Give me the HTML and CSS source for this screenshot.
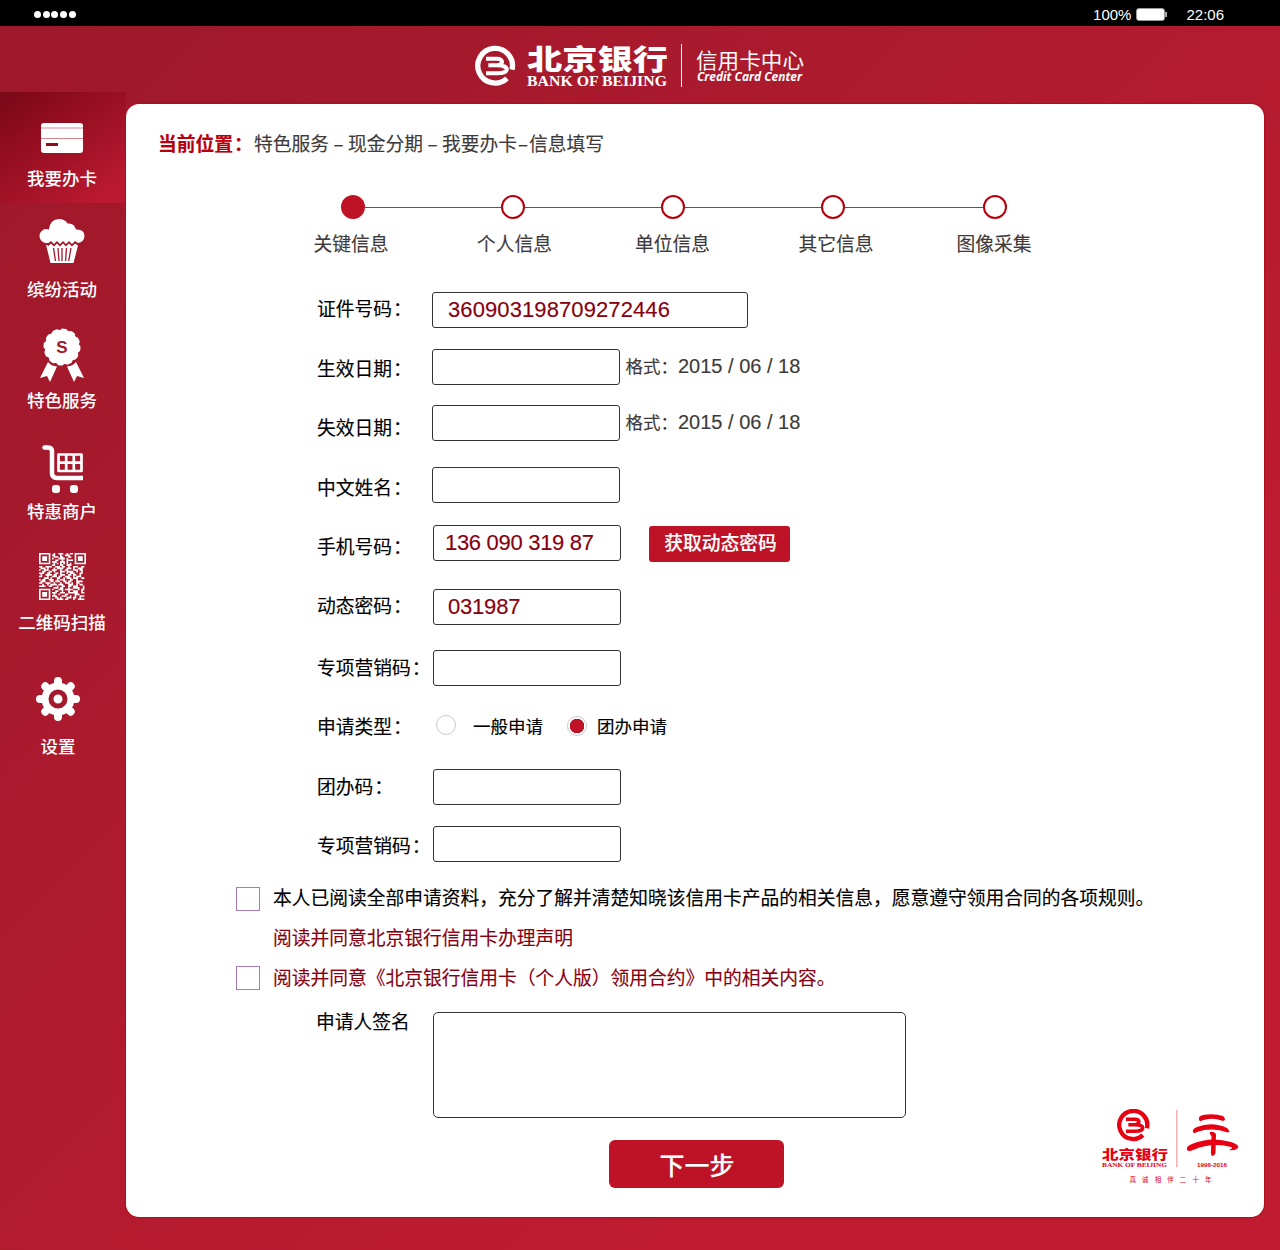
FILE: index.html
```html
<!DOCTYPE html>
<html lang="zh-CN">
<head>
    <meta charset="UTF-8">
    <meta name="viewport" content="width=device-width, initial-scale=1.0">
    <title>北京银行信用卡中心</title>
    <link rel="stylesheet" href="styles.css">
</head>
<body>
    <div class="status-bar">
        <div class="signal"><i></i><i></i><i></i><i></i><i></i></div>
        <div class="status-right">
            <span class="percent">100%</span>
            <span class="battery"></span>
            <span class="clock">22:06</span>
        </div>
    </div>

    <header>
        <svg class="brand" viewBox="0 0 330 44" fill="#fff">
            <g transform="translate(0 2) scale(.3333)" fill="none" stroke="#fff">
                <path d="M111 71A52 52 0 1 0 96 97" stroke-width="16"/>
                <path d="M33 38H66C86 38 86 57 66 58H40M66 58C106 58 104 82 68 82H33" stroke-width="12"/>
            </g>
            <text class="brand-cn" x="52" y="26" textLength="141" lengthAdjust="spacingAndGlyphs">北京银行</text>
            <text class="brand-en" x="52" y="42" textLength="140" lengthAdjust="spacingAndGlyphs">BANK OF BEIJING</text>
            <rect x="206" y="0" width="1" height="43"/>
            <text class="center-cn" x="221" y="24" textLength="108" lengthAdjust="spacingAndGlyphs">信用卡中心</text>
            <text class="center-en" x="222" y="37" textLength="105" lengthAdjust="spacingAndGlyphs">Credit Card Center</text>
        </svg>
    </header>

    <div class="container">
        <nav>
            <a class="nav-item active">
                <svg class="icon-card" width="42" height="30" viewBox="0 0 42 30">
                    <rect width="42" height="30" rx="3" fill="#fff"/>
                    <path d="M0 5H42M0 15.500H42" stroke="#d98590" stroke-width="1.200"/>
                    <rect x="5" y="20" width="12" height="3" fill="#8f0a1a"/>
                </svg>
                <span>我要办卡</span>
            </a>
            <a class="nav-item">
                <svg class="icon-cake" width="46" height="45" viewBox="0 0 46 45" fill="#fff">
                    <path d="M7 24A7 7 0 0 1 4 11Q6 9.500 10 10.500Q11 0 20 0Q26 0 28.500 4.500Q35 3.500 37 10.500Q45.500 10 45.500 17Q45 23 39 24L36 22L33 25L30 22L27 25L24 22L21 25L18 22L15 25L12 22L9.500 24Z"/>
                    <path d="M7 25.500L9.500 27L12 24.500L15 27.500L18 24.500L21 27.500L24 24.500L27 27.500L30 24.500L33 27.500L36 24.500L39 26.500L34.500 44H11.500Z"/>
                    <path d="M14.500 29L16.500 42M19 29L20 42M23 29V42M27.500 29L26.500 42M32 29L29.700 42" stroke="#a1182b" stroke-width="1.300"/>
                </svg>
                <span>缤纷活动</span>
            </a>
            <a class="nav-item">
                <svg class="icon-medal" width="44" height="54" viewBox="0 0 44 54" fill="#fff">
                    <path d="M8 34L0 50L7 48L10 54L17 38.500Q11 38 8 34ZM36 34L44 50L37 48L34 54L27 38.500Q33 38 36 34Z"/>
                    <circle cx="22" cy="19" r="17.300"/>
                    <circle cx="22" cy="19" r="16.500" fill="none" stroke="#fff" stroke-width="4" stroke-linecap="round" stroke-dasharray="3 5.640"/>
                    <text class="medal-text" x="22" y="24.500" text-anchor="middle">S</text>
                </svg>
                <span>特色服务</span>
            </a>
            <a class="nav-item">
                <svg class="icon-cart" width="41" height="48" viewBox="0 0 41 48" fill="none" stroke="#fff">
                    <path d="M2.500 2.500H6Q10 2.500 10 6.500V28Q10 33 15 33H41" stroke-width="4.500"/>
                    <circle cx="2.500" cy="2.500" r="2.250" fill="#fff" stroke="none"/>
                    <path d="M16.500 9.500H39.500V26H16.500ZM16 17.700H39M24.200 9V26M31.800 9V26" stroke-width="2.700" stroke-linejoin="round"/>
                    <g fill="#fff" stroke="none"><rect x="10" y="40" width="8" height="8" rx="3"/><rect x="28" y="40" width="8" height="8" rx="3"/></g>
                </svg>
                <span>特惠商户</span>
            </a>
            <a class="nav-item">
                <svg class="icon-qr" width="47" height="47" viewBox="0 0 29 29" fill="none" stroke="#fff">
                    <path d="M.5.5h6v6h-6zM22.500.5h6v6h-6zM.5 22.500h6v6h-6z"/>
                    <path d="M2 3.500h3M24 3.500h3M2 25.500h3" stroke-width="3"/>
                    <path d="M9 .5h1m2 0h3m2 0h1m1 0h2M8 1.500h2m3 0h1m2 0h3M9 2.500h3m1 0h2m3 0h2M8 3.500h1m3 0h4m1 0h1M10 4.500h2m2 0h1m2 0h4M8 5.500h3m2 0h3m1 0h1M9 6.500h1m1 0h1m1 0h1m1 0h1m1 0h1m1 0h1M8 7.500h2m3 0h2m2 0h3
                    M0 8.500h2m2 0h4m2 0h3m1 0h2m2 0h1m2 0h3m2 0h2M1 9.500h3m1 0h1m3 0h1m1 0h4m2 0h3m1 0h1m2 0h3M0 10.500h1m2 0h3m2 0h3m2 0h1m2 0h2m3 0h3m1 0h2M2 11.500h2m2 0h2m1 0h1m3 0h3m1 0h4m2 0h1m2 0h1M0 12.500h3m2 0h2m3 0h2m1 0h1m3 0h1m1 0h3m3 0h2M1 13.500h1m2 0h4m1 0h2m2 0h3m2 0h2m1 0h2m2 0h1M0 14.500h2m3 0h1m2 0h3m1 0h2m2 0h3m2 0h1m1 0h3M3 15.500h3m1 0h1m3 0h2m2 0h1m1 0h3m1 0h3m2 0h2M0 16.500h1m1 0h2m2 0h3m2 0h1m1 0h3m3 0h2m2 0h1M1 17.500h3m3 0h2m1 0h3m2 0h2m1 0h2m3 0h4M0 18.500h2m2 0h3m2 0h1m3 0h1m2 0h3m1 0h1m2 0h2M2 19.500h1m2 0h1m1 0h4m1 0h3m3 0h3m2 0h1m1 0h2M0 20.500h4m2 0h2m3 0h1m2 0h2m2 0h2m1 0h3m3 0h1
                    M9 21.500h3m1 0h2m3 0h1m2 0h4m2 0h1M8 22.500h1m3 0h3m1 0h5m3 0h1m1 0h2M10 23.500h2m2 0h1m3 0h1m2 0h3m2 0h1M8 24.500h3m2 0h3m2 0h6m2 0h2M9 25.500h1m2 0h1m3 0h2m4 0h3M8 26.500h3m3 0h3m2 0h1m2 0h1m2 0h3M10 27.500h2m1 0h1m3 0h3m1 0h2m2 0h1M8 28.500h1m2 0h4m1 0h2m3 0h1m2 0h4"/>
                </svg>
                <span>二维码扫描</span>
            </a>
            <a class="nav-item nav-settings">
                <svg class="icon-gear" width="44" height="44" viewBox="0 0 44 44">
                    <path d="M22 4V40M4 22H40M9.300 9.300L34.700 34.700M34.700 9.300L9.300 34.700" stroke="#fff" stroke-width="8" stroke-linecap="round"/>
                    <circle cx="22" cy="22" r="16.500" fill="#fff"/>
                    <circle cx="22" cy="22" r="7" fill="#fff" stroke="#a5192c" stroke-width="5"/>
                </svg>
                <span>设置</span>
            </a>
        </nav>

        <main>
            <div class="breadcrumb">
                <b>当前位置<span class="colon">：</span></b>
                <span>特色服务</span><i>–</i><span>现金分期</span><i>–</i><span>我要办卡</span><i class="tight">–</i><span>信息填写</span>
            </div>

            <ol class="steps">
                <li class="current"><span>关键信息</span></li>
                <li><span>个人信息</span></li>
                <li><span>单位信息</span></li>
                <li><span>其它信息</span></li>
                <li><span>图像采集</span></li>
            </ol>

            <form>
                <div class="row row-id">
                    <label for="idNumber">证件号码<span class="colon">：</span></label>
                    <input id="idNumber" class="wide" type="text" value="360903198709272446">
                </div>
                <div class="row row-start">
                    <label for="startDate">生效日期<span class="colon">：</span></label>
                    <input id="startDate" type="text">
                    <span class="hint">格式：<em>2015 / 06 / 18</em></span>
                </div>
                <div class="row row-end">
                    <label for="endDate">失效日期<span class="colon">：</span></label>
                    <input id="endDate" type="text">
                    <span class="hint">格式：<em>2015 / 06 / 18</em></span>
                </div>
                <div class="row row-name">
                    <label for="userName">中文姓名<span class="colon">：</span></label>
                    <input id="userName" type="text">
                </div>
                <div class="row row-phone">
                    <label for="phone">手机号码<span class="colon">：</span></label>
                    <input id="phone" type="text" value="136 090 319 87">
                    <button type="button" class="get-code">获取动态密码</button>
                </div>
                <div class="row row-code">
                    <label for="code">动态密码<span class="colon">：</span></label>
                    <input id="code" type="text" value="031987">
                </div>
                <div class="row row-promo">
                    <label for="promo">专项营销码<span class="colon">：</span></label>
                    <input id="promo" type="text">
                </div>
                <div class="row row-type">
                    <label>申请类型<span class="colon">：</span></label>
                    <div class="radios">
                        <input type="radio" name="type" id="typeNormal"><label for="typeNormal">一般申请</label>
                        <input type="radio" name="type" id="typeGroup" checked><label for="typeGroup">团办申请</label>
                    </div>
                </div>
                <div class="row row-group">
                    <label for="groupCode">团办码<span class="colon">：</span></label>
                    <input id="groupCode" type="text">
                </div>
                <div class="row row-promo2">
                    <label for="promo2">专项营销码<span class="colon">：</span></label>
                    <input id="promo2" type="text">
                </div>

                <div class="agreements">
                    <input type="checkbox" id="agree1">
                    <label for="agree1">本人已阅读全部申请资料，充分了解并清楚知晓该信用卡产品的相关信息，愿意遵守领用合同的各项规则。</label>
                    <a class="statement">阅读并同意北京银行信用卡办理声明</a>
                    <input type="checkbox" id="agree2">
                    <label for="agree2" class="red">阅读并同意《北京银行信用卡（个人版）领用合约》中的相关内容。</label>
                </div>

                <div class="row row-sign">
                    <label for="sign">申请人签名</label>
                    <textarea id="sign"></textarea>
                </div>

                <button type="button" class="next">下一步</button>
            </form>

            <!-- 20th anniversary badge -->
            <svg class="anniversary" viewBox="0 0 138 76" fill="#e60012">
                <g transform="translate(15 0) scale(.27)" fill="none" stroke="#e60012">
                    <path d="M111 71A52 52 0 1 0 96 97" stroke-width="16"/>
                    <path d="M33 38H66C86 38 86 57 66 58H42M66 58C106 58 104 82 68 82H33" stroke-width="13"/>
                </g>
                <text class="ann-cn" x="0" y="49.500" textLength="66" lengthAdjust="spacingAndGlyphs">北京银行</text>
                <text class="ann-en" x="0" y="58" textLength="65" lengthAdjust="spacingAndGlyphs">BANK OF BEIJING</text>
                <rect x="74.500" y="1" width=".8" height="57" opacity=".6"/>
                <path d="M97 11Q96 7 101 6Q112 4 121 7Q125 11 121 12Q110 8 100 11.500Q98 13 97 11Z"/>
                <path d="M91 23Q90 20 95 18Q110 12 125 19Q129 23 126 23.500Q110 18 95 23Q92 25 91 23Z"/>
                <path d="M85 41Q84 37 90 35Q109 27 129 33Q138 36 136 39Q133 42 127 41Q132 39 129 38Q110 33 91 41Q87 43 85 41Z"/>
                <path d="M108 23Q112 22 114 25L113.500 44Q112 48 109.500 46.500Q108.500 45 109 41L109.500 27Q107 25 108 23Z"/>
                <text class="ann-year" x="95" y="58" textLength="30" lengthAdjust="spacingAndGlyphs">1996-2016</text>
                <text class="ann-slogan" x="27.500" y="73" textLength="82">真诚相伴二十年</text>
            </svg>
        </main>
    </div>
</body>
</html>
```
FILE: styles.css
```css
*,
*::before,
*::after {
    box-sizing: border-box;
}

body {
    margin: 0;
    width: 1280px;
    height: 1250px;
    overflow: hidden;
    background: linear-gradient(135deg, #9c182a 0%, #bf1c32 75%, #bf1c32 100%);
    font-family: "Noto Sans CJK SC", sans-serif;
    font-size: 18.75px;
    color: #000;
}

.status-bar {
    height: 26px;
    background: #000;
    color: #fff;
    display: flex;
    justify-content: space-between;
    align-items: center;
    padding: 3px 56px 0 34px;
    font-family: "Liberation Sans", sans-serif;
    font-size: 15px;
}

.signal {
    display: flex;
    gap: 1.7px;
}

.signal i {
    width: 7px;
    height: 7px;
    border-radius: 50%;
    background: #fff;
}

.status-right {
    display: flex;
    align-items: center;
}

.battery {
    width: 29px;
    height: 13px;
    margin: 0 21px 0 5px;
    border: 1px solid #999;
    border-radius: 3px;
    background: #fff;
    position: relative;
}

.battery::after {
    content: "";
    position: absolute;
    right: -3px;
    top: 3px;
    width: 2px;
    height: 5px;
    background: #aaa;
}

header {
    height: 66px;
    padding-top: 18px;
    display: flex;
    justify-content: center;
}

.brand {
    width: 330px;
    height: 44px;
    overflow: visible;
}

.brand-cn {
    font-size: 28px;
    font-weight: 900;
}

.brand-en {
    font: bold 14.5px "Liberation Serif", serif;
}

.center-cn {
    font-size: 21px;
}

.center-en {
    font: italic bold 11.5px "Open Sans", sans-serif;
}

.container {
    display: flex;
    align-items: flex-start;
}

nav {
    width: 126px;
}

.nav-item {
    height: 111px;
    padding: 0 2px 13.5px 0;
    display: flex;
    flex-direction: column;
    justify-content: flex-end;
    align-items: center;
    color: #fff;
    font-size: 17.5px;
    font-weight: 500;
    line-height: 24px;
}

.nav-item svg {
    margin-bottom: 12.5px;
}

.nav-item.active {
    background: linear-gradient(145deg, #7d0817 5%, #bb1931 90%);
}

.nav-item .icon-medal,
.nav-item .icon-cart {
    margin-bottom: 5.5px;
}

.nav-item .icon-qr {
    margin-bottom: 9.5px;
}

.medal-text {
    font: bold 17px "Liberation Sans", sans-serif;
    fill: #a1182b;
}

.nav-settings {
    height: 124px;
    padding-right: 10px;
}

main {
    position: relative;
    width: 1138px;
    height: 1113px;
    margin-top: 12px;
    padding: 19px 32px;
    background: #fff;
    border-radius: 13px;
    box-shadow: 0 0 1px 1px #ad0f22;
    -webkit-text-stroke: .15px currentColor;
}

.breadcrumb {
    height: 40px;
    line-height: 40px;
    display: flex;
    color: #3e3a39;
}

.breadcrumb b {
    width: 96px;
    color: #b7000f;
    font-weight: 700;
}

.breadcrumb i {
    width: 19px;
    text-align: center;
    font-style: normal;
}

.breadcrumb i.tight {
    width: 12px;
}

.colon {
    margin-left: 1px;
}

.steps {
    list-style: none;
    display: flex;
    margin: 32px 0 0 115px;
    padding: 0;
    color: #3e3a39;
    line-height: 24px;
}

.steps li {
    width: 160px;
    display: flex;
    flex-direction: column;
    align-items: center;
    gap: 12px;
    position: relative;
}

.steps li:last-child {
    width: 164px;
}

.steps li::before {
    content: "";
    width: 24px;
    height: 24px;
    border: 2px solid #b7000f;
    border-radius: 50%;
    background: #fff;
}

.steps li.current::before {
    border: none;
    background: #be1226;
}

/* connector to the next step */
.steps li:not(:last-child)::after {
    content: "";
    position: absolute;
    top: 12px;
    left: 92px;
    width: 136px;
    height: 1px;
    background: #595757;
}

.steps li:nth-child(4):not(:last-child)::after {
    width: 138px;
}

.steps li:nth-child(1) span { margin-left: -4px; }
.steps li:nth-child(2) span { margin-left: 3px; }
.steps li:nth-child(3) span { margin-left: -1px; }
.steps li:nth-child(4) span { margin-left: 6px; }
.steps li:last-child span { margin-left: -2px; }

form {
    padding: 37px 0 0 159px;
}

.row {
    display: flex;
    height: 36px;
}

.row > label {
    width: 115px;
    line-height: 36px;
    white-space: nowrap;
}

.row-id > label { margin-top: -2px; }
.row-start { margin-top: 21px; }
.row-start > label { margin-top: 1px; }
.row-end { margin-top: 20px; }
.row-end > label { margin-top: 4px; }
.row-name { margin-top: 26px; }
.row-name > label { margin-top: 2px; }
.row-phone { margin-top: 22px; }
.row-phone > label { margin-top: 3px; }
.row-code { margin-top: 28px; }
.row-code > label { margin-top: -2px; }
.row-promo { margin-top: 25px; }
.row-promo > label { margin-top: -1px; }
.row-type { margin-top: 23px; }
.row-type > label { margin-top: -1px; }
.row-group { margin-top: 24px; }
.row-group > label { margin-top: -1px; }
.row-promo2 { margin-top: 21px; }
.row-promo2 > label { margin-top: 1px; }

.row-phone > label,
.row-code > label,
.row-promo > label,
.row-type > label,
.row-group > label,
.row-promo2 > label,
.row-sign > label {
    width: 116px;
}

input[type="text"] {
    width: 188px;
    height: 36px;
    padding: 0 14px 0;
    border: 1px solid #333;
    border-radius: 3px;
    background: #fff;
    color: #870010;
    font-family: "Liberation Sans", sans-serif;
    font-size: 22px;
    letter-spacing: -.2px;
}

input.wide {
    width: 316px;
    padding-left: 15px;
    letter-spacing: .1px;
}

#phone {
    padding-left: 11px;
    letter-spacing: -.3px;
}

.hint {
    margin-left: 5.5px;
    line-height: 34px;
    font-size: 17.5px;
    color: #3e3a39;
}

.hint em {
    font: 20px "Liberation Sans", sans-serif;
}

button {
    border: none;
    background: #be1226;
    color: #fff;
    font-family: inherit;
    font-weight: 500;
}

.get-code {
    width: 141px;
    height: 36px;
    margin: 1px 0 0 28px;
    padding: 0 0 5px 2px;
    border-radius: 3px;
    font-size: 18.75px;
}

.radios {
    display: flex;
    align-items: center;
    font-size: 17.5px;
}

.radios label {
    margin-top: -3px;
}

input[type="radio"] {
    appearance: none;
    width: 20px;
    height: 20px;
    margin: -4px 17px 0 3px;
    border: 1px solid #c9caca;
    border-radius: 50%;
    background: #fff;
}

input[type="radio"]:checked {
    background: radial-gradient(circle, #be1226 7px, #fff 7.5px);
}

#typeGroup {
    margin: -3px 10px 0 24px;
}

.agreements {
    display: grid;
    grid-template-columns: 24px 1fr;
    column-gap: 13px;
    grid-auto-rows: 40px;
    align-items: center;
    margin: 16px 0 0 -81px;
    white-space: nowrap;
}

.agreements label,
.agreements .statement {
    margin-top: -3px;
}

.agreements .statement {
    grid-column: 2;
}

.agreements .statement,
.agreements .red {
    color: #870010;
}

input[type="checkbox"] {
    appearance: none;
    width: 24px;
    height: 24px;
    margin: 2px 0 0;
    border: 1px solid #a77bb5;
    background: #fff;
}

#agree2 {
    margin-top: -1px;
}

.row-sign {
    height: 106px;
    margin-top: 14px;
}

.row-sign > label {
    height: 20px;
    line-height: 20px;
    margin: -1px 1px 0 -1px;
}

textarea {
    width: 473px;
    height: 106px;
    border: 1px solid #333;
    border-radius: 5px;
    resize: none;
}

.next {
    display: block;
    width: 175px;
    height: 48px;
    margin: 22px 0 0 292px;
    padding: 0 0 1px 1px;
    border-radius: 6px;
    font-size: 25px;
}

.anniversary {
    position: absolute;
    right: 24px;
    bottom: 32px;
    width: 138px;
    height: 76px;
    -webkit-text-stroke: 0;
}

.ann-cn {
    font-size: 13px;
    font-weight: 900;
}

.ann-en {
    font: bold 7px "Liberation Serif", serif;
}

.ann-year {
    font: bold 6px "Liberation Sans", sans-serif;
}

.ann-slogan {
    font-size: 6.5px;
}
```
